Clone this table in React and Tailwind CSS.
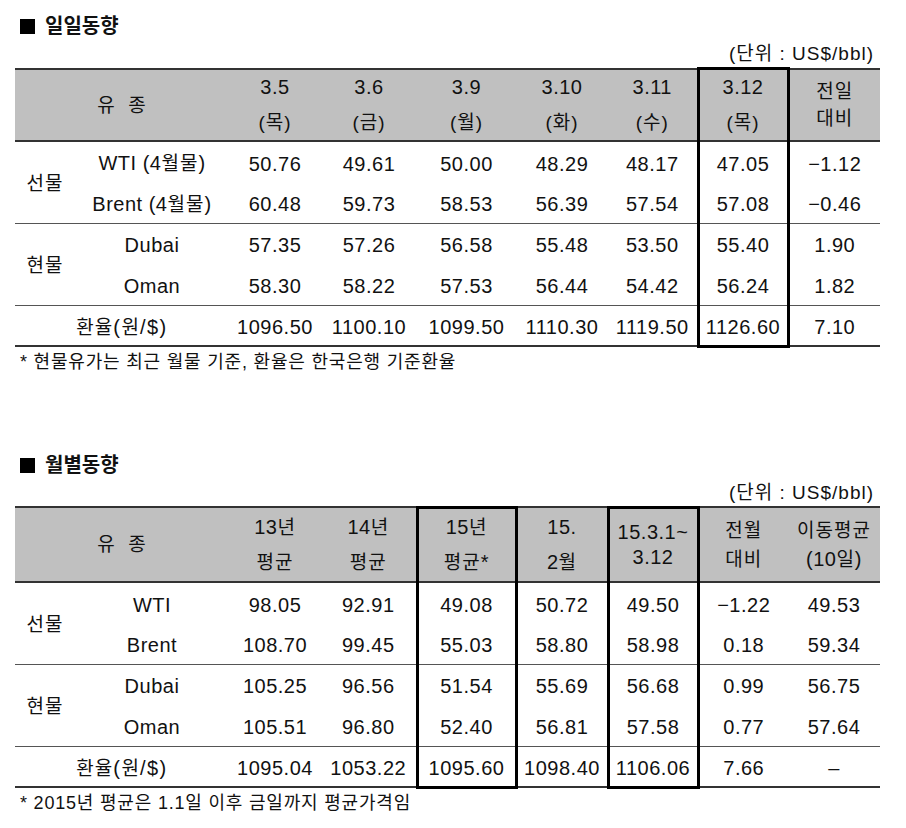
import React from "react";

const K = ({ children }) => <span className="text-[19px] tracking-[1px]">{children}</span>;

const boxX = "border-x-[3px] border-black";

const daily = {
  head: [
    ["3.5", "(목)"],
    ["3.6", "(금)"],
    ["3.9", "(월)"],
    ["3.10", "(화)"],
    ["3.11", "(수)"],
    ["3.12", "(목)"],
  ],
  rows: [
    { group: "선물", label: <>WTI (4<K>월물</K>)</>, vals: ["50.76", "49.61", "50.00", "48.29", "48.17", "47.05", "−1.12"] },
    { label: <>Brent (4<K>월물</K>)</>, vals: ["60.48", "59.73", "58.53", "56.39", "57.54", "57.08", "−0.46"], line: true },
    { group: "현물", label: "Dubai", vals: ["57.35", "57.26", "56.58", "55.48", "53.50", "55.40", "1.90"] },
    { label: "Oman", vals: ["58.30", "58.22", "57.53", "56.44", "54.42", "56.24", "1.82"], line: true },
  ],
  fx: ["1096.50", "1100.10", "1099.50", "1110.30", "1119.50", "1126.60", "7.10"],
  boxes: [5],
};

const monthly = {
  rows: [
    { group: "선물", label: "WTI", vals: ["98.05", "92.91", "49.08", "50.72", "49.50", "−1.22", "49.53"] },
    { label: "Brent", vals: ["108.70", "99.45", "55.03", "58.80", "58.98", "0.18", "59.34"], line: true },
    { group: "현물", label: "Dubai", vals: ["105.25", "96.56", "51.54", "55.69", "56.68", "0.99", "56.75"] },
    { label: "Oman", vals: ["105.51", "96.80", "52.40", "56.81", "57.58", "0.77", "57.64"], line: true },
  ],
  fx: ["1095.04", "1053.22", "1095.60", "1098.40", "1106.06", "7.66", "–"],
  boxes: [2, 4],
};

const Cols = () => (
  <colgroup>
    <col className="w-[60px]" />
    <col className="w-[154px]" />
    <col className="w-[92px]" />
    <col className="w-[96px]" />
    <col className="w-[99px]" />
    <col className="w-[92px]" />
    <col className="w-[90px]" />
    <col className="w-[90px]" />
    <col className="w-[92px]" />
  </colgroup>
);

const Title = ({ children }) => (
  <>
    <div className="flex items-center gap-[10px] pl-[20px] pt-[13px] h-[40px]">
      <div className="w-[15px] h-[15px] bg-black" />
      <span className="text-[20px] font-bold leading-[27px]">{children}</span>
    </div>
    <div className="h-[27px] flex items-end justify-end pr-[32px] pb-[2px] text-[19px] tracking-[1px] leading-[22px]">
      (<K>단위</K>&nbsp;:&nbsp;US$/bbl)
    </div>
  </>
);

const DataRows = ({ data }) => {
  const last = data.rows.length;
  return (
    <>
      {data.rows.map((r, i) => (
        <tr key={i} className={"h-[41px] " + (r.line ? "border-b border-[#555]" : "")}>
          {r.group && (
            <td rowSpan={2} className="text-center align-middle pt-[2px]">
              <K>{r.group}</K>
            </td>
          )}
          <td className="text-center align-middle pt-[3px]">{r.label}</td>
          {r.vals.map((v, j) => (
            <td
              key={j}
              className={
                "text-center align-middle pt-[3px] " +
                (data.boxes.includes(j) ? boxX : "")
              }
            >
              {v}
            </td>
          ))}
        </tr>
      ))}
      <tr className="h-[41px] border-b-2 border-[#333]" key={last}>
        <td colSpan={2} className="text-center align-middle pt-[3px] tracking-[1.5px]">
          <K>환율</K>(<K>원</K>/$)
        </td>
        {data.fx.map((v, j) => (
          <td
            key={j}
            className={
              "text-center align-middle pt-[3px] " +
              (data.boxes.includes(j) ? boxX + " border-b-[3px]" : "")
            }
          >
            {v}
          </td>
        ))}
      </tr>
    </>
  );
};

const Two = ({ a, b, lh = "leading-[35px]" }) => (
  <div className={lh}>
    <div>{a}</div>
    <div>{b}</div>
  </div>
);

const App = () => {
  return (
    <div
      className="w-[906px] h-[828px] bg-white text-[#111] overflow-hidden"
      style={{ fontFamily: "'Liberation Sans', 'Noto Sans CJK KR', sans-serif" }}
    >
      {/* 일일동향 */}
      <Title>일일동향</Title>
      <table className="ml-[15px] w-[865px] table-fixed border-collapse text-[20px] tracking-[0.5px]">
        <Cols />
        <thead>
          <tr className="h-[72px] bg-[#c0c0c0] border-t-2 border-b-2 border-[#333]">
            <th colSpan={2} className="font-normal text-center align-middle">
              <K>유&nbsp;&nbsp;종</K>
            </th>
            {daily.head.map((h, i) => (
              <th
                key={i}
                className={
                  "font-normal text-center align-middle " +
                  (i === 5 ? boxX + " border-t-[3px]" : "")
                }
              >
                <Two a={h[0]} b={<K>{h[1]}</K>} />
              </th>
            ))}
            <th className="font-normal text-center align-middle">
              <Two a={<K>전일</K>} b={<K>대비</K>} lh="leading-[27px]" />
            </th>
          </tr>
        </thead>
        <tbody>
          <DataRows data={daily} />
        </tbody>
      </table>
      <div className="pl-[20px] h-[28px] leading-[28px] text-[18px] tracking-[0.8px]">
        * 현물유가는 최근 월물 기준, 환율은 한국은행 기준환율
      </div>

      {/* 월별동향 */}
      <div className="h-[63px]" />
      <Title>월별동향</Title>
      <table className="ml-[15px] w-[865px] table-fixed border-collapse text-[20px] tracking-[0.5px]">
        <Cols />
        <thead>
          <tr className="h-[75px] bg-[#c0c0c0] border-t-2 border-b-2 border-[#333]">
            <th colSpan={2} className="font-normal text-center align-middle">
              <K>유&nbsp;&nbsp;종</K>
            </th>
            <th className="font-normal text-center align-middle">
              <Two a={<>13<K>년</K></>} b={<K>평균</K>} />
            </th>
            <th className="font-normal text-center align-middle">
              <Two a={<>14<K>년</K></>} b={<K>평균</K>} />
            </th>
            <th className={"font-normal text-center align-middle border-t-[3px] " + boxX}>
              <Two a={<>15<K>년</K></>} b={<><K>평균</K>*</>} />
            </th>
            <th className="font-normal text-center align-middle">
              <Two a="15." b={<>2<K>월</K></>} />
            </th>
            <th className={"font-normal text-center align-middle border-t-[3px] " + boxX}>
              <Two a="15.3.1~" b="3.12" lh="leading-[25px]" />
            </th>
            <th className="font-normal text-center align-middle">
              <Two a={<K>전월</K>} b={<K>대비</K>} lh="leading-[28px]" />
            </th>
            <th className="font-normal text-center align-middle">
              <Two a={<K>이동평균</K>} b={<>(10<K>일</K>)</>} lh="leading-[28px]" />
            </th>
          </tr>
        </thead>
        <tbody>
          <DataRows data={monthly} />
        </tbody>
      </table>
      <div className="pl-[20px] h-[28px] leading-[28px] text-[18px] tracking-[0.8px]">
        * 2015년 평균은 1.1일 이후 금일까지 평균가격임
      </div>
    </div>
  );
};

export default App;
